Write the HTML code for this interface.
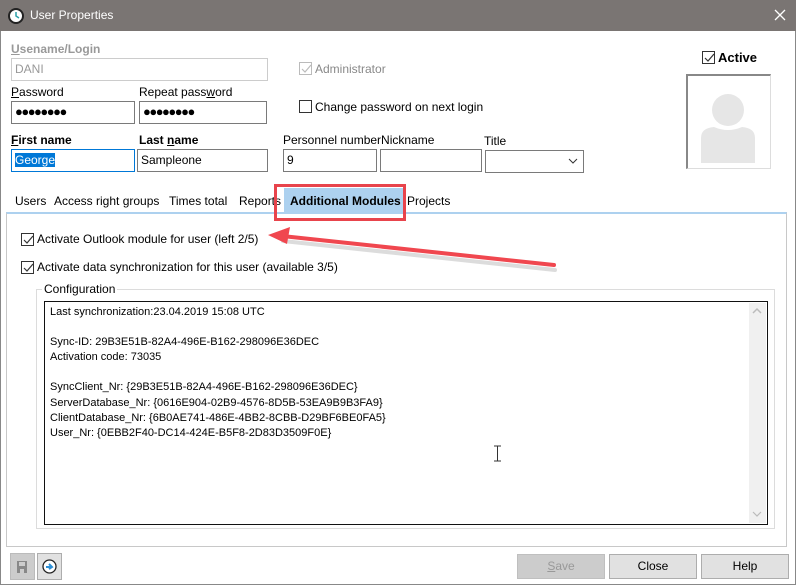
<!DOCTYPE html>
<html><head><style>
*{box-sizing:border-box;margin:0;padding:0}
body{width:796px;height:585px;overflow:hidden;background:#fff;font-family:"Liberation Sans",sans-serif;font-size:12px;color:#000;position:relative}
.a{position:absolute;white-space:nowrap}
.inp{position:absolute;border:1px solid #7a7a7a;background:#fff;height:23px;padding:3px 0 0 3px}
.cb{position:absolute;width:13px;height:13px;border:1px solid #333;background:#fff}
.cb svg{position:absolute;left:0;top:0}
.btn{position:absolute;border:1px solid #adadad;background:#e1e1e1;text-align:center;line-height:23px;height:25px}
</style></head><body>
<div class="a" style="left:0;top:0;width:796px;height:31px;background:#7a7573"></div>
<svg class="a" style="left:8px;top:8px" width="16" height="16"><circle cx="8" cy="8" r="7" fill="#fff" stroke="#222" stroke-width="2"/><path d="M8 4V8L11 10" stroke="#2a9fa8" stroke-width="1.5" fill="none"/></svg>
<div class="a" style="left:30px;top:8px;color:#fff;font-size:12px">User Properties</div>
<svg class="a" style="left:774px;top:9px" width="12" height="12"><path d="M1 1L11 11M11 1L1 11" stroke="#fff" stroke-width="1.3"/></svg>
<div class="a" style="left:0;top:31px;width:1px;height:554px;background:#888"></div>
<div class="a" style="left:795px;top:31px;width:1px;height:554px;background:#888"></div>
<div class="a" style="left:0;top:584px;width:796px;height:1px;background:#888"></div>

<div class="a" style="left:11px;top:42px;color:#999;font-weight:bold"><u>U</u>sename/Login</div>
<div class="inp" style="left:11px;top:58px;width:257px;border-color:#ccc;color:#999">DANI</div>
<div class="cb" style="left:299px;top:62px;border-color:#bbb"><svg width="13" height="13"><path d="M2 6L5 9L11 2" stroke="#bbb" fill="none" stroke-width="1.2"/></svg></div>
<div class="a" style="left:315px;top:62px;color:#888">Administrator</div>
<div class="a" style="left:11px;top:85px"><u>P</u>assword</div>
<div class="inp" style="left:11px;top:101px;width:124px;font-size:13px;letter-spacing:-1.5px;padding-top:2px">●●●●●●●●</div>
<div class="a" style="left:139px;top:85px">Repeat pass<u>w</u>ord</div>
<div class="inp" style="left:139px;top:101px;width:128px;font-size:13px;letter-spacing:-1.5px;padding-top:2px">●●●●●●●●</div>
<div class="cb" style="left:299px;top:100px"></div>
<div class="a" style="left:315px;top:100px">Change password on next login</div>

<div class="a" style="left:11px;top:133px;font-weight:bold"><u>F</u>irst name</div>
<div class="inp" style="left:11px;top:149px;width:124px;border-color:#0078d7"><span style="background:#0078d7;color:#fff">George</span></div>
<div class="a" style="left:139px;top:133px;font-weight:bold">Last <u>n</u>ame</div>
<div class="inp" style="left:137px;top:149px;width:131px">Sampleone</div>
<div class="a" style="left:283px;top:133px">Personnel numberNickname</div>
<div class="inp" style="left:283px;top:149px;width:94px">9</div>
<div class="inp" style="left:380px;top:149px;width:102px"></div>
<div class="a" style="left:484px;top:134px">Title</div>
<div class="inp" style="left:485px;top:150px;width:99px"></div>
<svg class="a" style="left:568px;top:157px" width="10" height="8"><path d="M1 2L5 6L9 2" stroke="#333" fill="none"/></svg>

<div class="cb" style="left:702px;top:51px"><svg width="13" height="13"><path d="M2 6L5 9L11 2" stroke="#333" fill="none" stroke-width="1.2"/></svg></div>
<div class="a" style="left:718px;top:50px;font-weight:bold;font-size:13px">Active</div>
<div class="a" style="left:686px;top:74px;width:85px;height:95px;border:1px solid #ddd;border-top:2px solid #888;border-left:2px solid #888;background:#fff">
<svg width="80" height="90"><circle cx="40" cy="34" r="16" fill="#e6e6e6"/><path d="M13 87V62Q13 52 26 51Q40 57 54 51Q67 52 67 62V87Z" fill="#e6e6e6"/></svg></div>

<div class="a" style="left:6px;top:212px;width:781px;height:335px;border:1px solid #c8c8c8;border-top:2px solid #add1ef"></div>
<div class="a" style="left:15px;top:194px">Users</div>
<div class="a" style="left:54px;top:194px">Access right groups</div>
<div class="a" style="left:169px;top:194px">Times total</div>
<div class="a" style="left:239px;top:194px">Reports</div>
<div class="a" style="left:284px;top:188px;width:119px;height:25px;background:#add1ef;font-weight:bold;padding:6px 0 0 6px">Additional Modules</div>
<div class="a" style="left:407px;top:194px">Projects</div>
<div class="a" style="left:274px;top:184px;width:132px;height:37px;border:3px solid #e8444c"></div>

<div class="cb" style="left:21px;top:233px"><svg width="13" height="13"><path d="M2 6L5 9L11 2" stroke="#333" fill="none" stroke-width="1.2"/></svg></div>
<div class="a" style="left:37px;top:232px">Activate Outlook module for user (left 2/5)</div>
<div class="cb" style="left:21px;top:261px"><svg width="13" height="13"><path d="M2 6L5 9L11 2" stroke="#333" fill="none" stroke-width="1.2"/></svg></div>
<div class="a" style="left:37px;top:260px">Activate data synchronization for this user (available 3/5)</div>
<svg class="a" style="left:260px;top:225px" width="310" height="50"><path d="M294 42L22 13" stroke="#aaa" stroke-width="4" stroke-linecap="round" opacity=".4" transform="translate(1,3)"/><path d="M294 40L22 11" stroke="#f0474f" stroke-width="4" stroke-linecap="round"/><path d="M8 10L30 2L27 19Z" fill="#f0474f"/></svg>

<div class="a" style="left:36px;top:289px;width:739px;height:240px;border:1px solid #dcdcdc"></div>
<div class="a" style="left:42px;top:282px;background:#fff;padding:0 2px">Configuration</div>
<div class="a" style="left:44px;top:301px;width:724px;height:224px;border:1px solid #111;background:#fff"></div>
<div class="a" style="left:749px;top:303px;width:17px;height:220px;background:#f0f0f0"></div>
<svg class="a" style="left:752px;top:307px" width="10" height="8"><path d="M1 6L5 2L9 6" stroke="#bbb" fill="none" stroke-width="1.5"/></svg>
<svg class="a" style="left:752px;top:510px" width="10" height="8"><path d="M1 2L5 6L9 2" stroke="#bbb" fill="none" stroke-width="1.2"/></svg>
<div class="a" style="left:50px;top:305px;line-height:15.1px;font-size:11px">Last synchronization:23.04.2019 15:08 UTC<br><br>Sync-ID: 29B3E51B-82A4-496E-B162-298096E36DEC<br>Activation code: 73035<br><br>SyncClient_Nr: {29B3E51B-82A4-496E-B162-298096E36DEC}<br>ServerDatabase_Nr: {0616E904-02B9-4576-8D5B-53EA9B9B3FA9}<br>ClientDatabase_Nr: {6B0AE741-486E-4BB2-8CBB-D29BF6BE0FA5}<br>User_Nr: {0EBB2F40-DC14-424E-B5F8-2D83D3509F0E}</div>
<svg class="a" style="left:493px;top:445px" width="9" height="17"><path d="M1 1H8M4.5 1V16M1 16H8" stroke="#333" fill="none"/></svg>

<div class="a" style="left:10px;top:553px;width:25px;height:27px;background:#ccc;border:1px solid #bbb"><svg width="23" height="25"><path d="M6 7H16V19H6Z" fill="#888"/><rect x="8" y="8" width="6" height="4" fill="#ccc"/><rect x="9" y="15" width="4" height="4" fill="#ccc"/></svg></div>
<div class="a" style="left:37px;top:553px;width:25px;height:27px;background:#e1e1e1;border:1px solid #adadad"><svg width="23" height="25"><circle cx="11.5" cy="12.5" r="6.5" fill="#fff" stroke="#222" stroke-width="1.3"/><path d="M8 13H14M11 10L14 13L11 15" stroke="#2c8fd6" stroke-width="2" fill="none"/></svg></div>
<div class="btn" style="left:517px;top:554px;width:88px;background:#ccc;border-color:#bfbfbf;color:#999"><u>S</u>ave</div>
<div class="btn" style="left:609px;top:554px;width:88px">Close</div>
<div class="btn" style="left:701px;top:554px;width:88px">Help</div>
</body></html>
